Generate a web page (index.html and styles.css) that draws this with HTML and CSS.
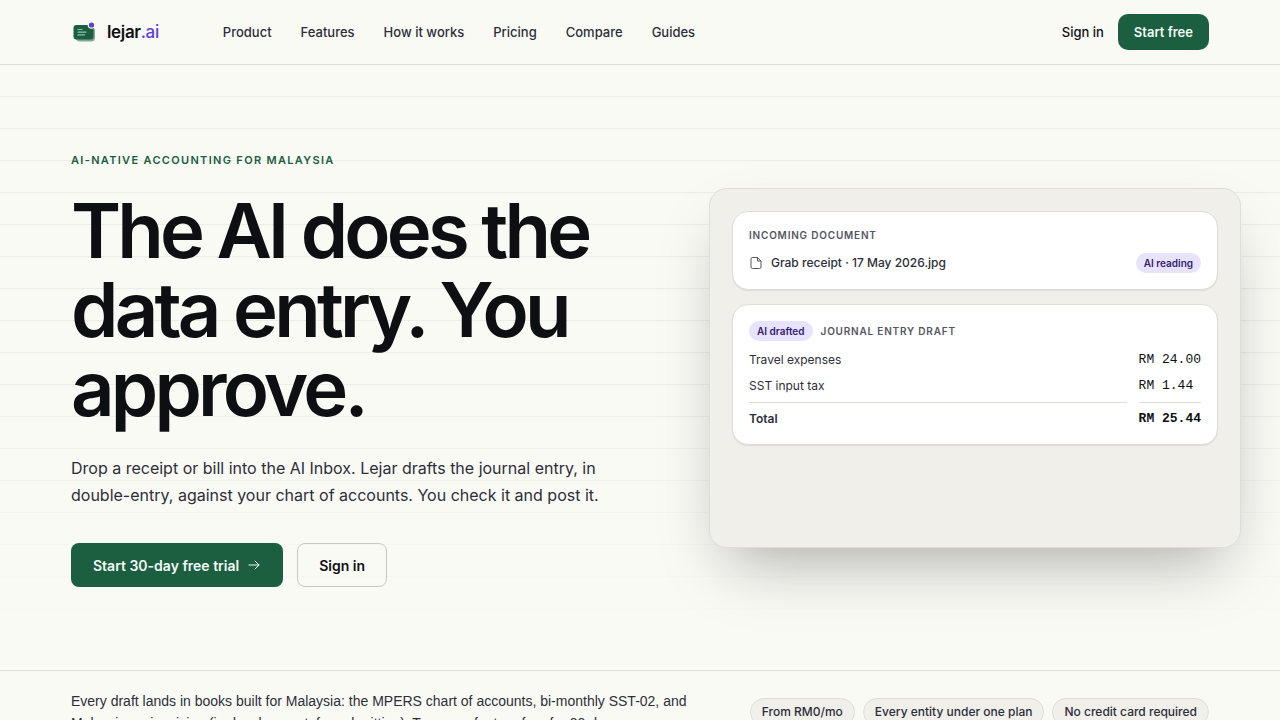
FILE: index.html
```html
<!DOCTYPE html>
<html lang="en">
  <head>
    <meta charset="UTF-8" />
    <meta name="viewport" content="width=device-width, initial-scale=1.0" />
    <title>lejar.ai - AI-native accounting for Malaysia</title>
    <link rel="stylesheet" href="styles.css">
  </head>
  <body>
    <header class="site-header">
      <div class="container header-inner">
        <a href="#" class="brand">
          <svg class="brand-mark" viewBox="0 0 26 26" aria-hidden="true">
            <rect x="5" y="8" width="19" height="14.500" rx="4" fill="#7fa893" />
            <rect x="2.500" y="6" width="20" height="14.500" rx="3" fill="#1b5e40" />
            <path d="M7 10.500h4M7 13.200h8M7 15.900h6.500" stroke="#8fc5a6" stroke-width="1.200" stroke-linecap="round" />
            <circle cx="20.500" cy="6" r="3.800" fill="#fafaf5" />
            <circle cx="20.500" cy="6" r="2.600" fill="#5b3fe0" />
          </svg>
          <span class="brand-name">lejar<span class="brand-tld">.ai</span></span>
        </a>
        <nav class="main-nav">
          <a href="#product">Product</a>
          <a href="#features">Features</a>
          <a href="#how">How it works</a>
          <a href="#pricing">Pricing</a>
          <a href="#compare">Compare</a>
          <a href="#guides">Guides</a>
        </nav>
        <div class="header-actions">
          <a href="#signin" class="signin-link">Sign in</a>
          <button type="button" class="btn btn-small">Start free</button>
        </div>
      </div>
    </header>

    <main>
      <section class="hero">
        <div class="container hero-grid">
          <div class="hero-copy">
            <p class="eyebrow">AI-native accounting for Malaysia</p>
            <h1>The AI does the data entry. You approve.</h1>
            <p class="lead">
              Drop a receipt or bill into the AI Inbox. Lejar drafts the journal entry, in
              double-entry, against your chart of accounts. You check it and post it.
            </p>
            <div class="hero-buttons">
              <button type="button" class="btn btn-primary">
                Start 30-day free trial
                <svg class="arrow" viewBox="0 0 14 14" aria-hidden="true">
                  <path d="M2 7h10M8 3l4 4-4 4" />
                </svg>
              </button>
              <button type="button" class="btn btn-outline">Sign in</button>
            </div>
          </div>

          <div class="demo-panel">
            <div class="card">
              <h2 class="card-label">Incoming document</h2>
              <div class="file-row">
                <svg class="file-icon" viewBox="0 0 14 14" aria-hidden="true">
                  <path d="M8.500 1.500H3.500a1.500 1.500 0 0 0-1.500 1.500v8a1.500 1.500 0 0 0 1.500 1.500h7a1.500 1.500 0 0 0 1.500-1.500V5zM8.500 1.500V5H12" />
                </svg>
                <span class="file-name">Grab receipt · 17 May 2026.jpg</span>
                <span class="badge">AI reading</span>
              </div>
            </div>
            <div class="card">
              <div class="draft-head">
                <span class="badge">AI drafted</span>
                <h2 class="card-label">Journal entry draft</h2>
              </div>
              <table class="entry">
                <tr>
                  <td>Travel expenses</td>
                  <td class="amount">RM 24.00</td>
                </tr>
                <tr class="last-line">
                  <td>SST input tax</td>
                  <td class="amount">RM 1.44</td>
                </tr>
                <tr class="total">
                  <td>Total</td>
                  <td class="amount">RM 25.44</td>
                </tr>
              </table>
            </div>
          </div>
        </div>
      </section>

      <section class="facts">
        <div class="container facts-inner">
          <p>
            Every draft lands in books built for Malaysia: the MPERS chart of accounts, bi-monthly SST-02, and
            Malaysian e-invoicing (in development, for submitting). Try every feature free for 30 days.
          </p>
          <ul class="chips">
            <li>From RM0/mo</li>
            <li>Every entity under one plan</li>
            <li>No credit card required</li>
          </ul>
        </div>
      </section>
    </main>
  </body>
</html>
```

FILE: styles.css
```css
:root {
  --bg: #fafaf5;
  --panel: #f0efea;
  --green: #1b5e40;
  --ink: #0e0f12;
  --text: #2d2e3a;
  --muted: #555663;
  --line: #deded8;
  --violet: #5b3fe0;
  --violet-soft: #e8e3fd;
  --font-ui: Inter, "Liberation Sans", sans-serif;
  --font-text: "Liberation Sans", Arial, sans-serif;
}
* {
  box-sizing: border-box;
}
body {
  margin: 0;
  background: var(--bg);
  color: var(--text);
  font-family: var(--font-ui);
}
h1,
h2,
p,
ul {
  margin: 0;
}
a {
  color: inherit;
  text-decoration: none;
}
.container {
  max-width: 1280px;
  margin: 0 auto;
  padding: 0 71px;
}

/* header */
.site-header {
  border-bottom: 1px solid var(--line);
}
.header-inner {
  display: flex;
  align-items: center;
  height: 64px;
}
.brand {
  display: flex;
  align-items: center;
  gap: 10px;
  margin-right: 64px;
}
.brand-mark {
  width: 26px;
  height: 26px;
}
.brand-name {
  font-size: 17px;
  font-weight: 600;
  letter-spacing: -0.02em;
  color: var(--ink);
}
.brand-tld {
  color: var(--violet);
  font-weight: 500;
}
.main-nav {
  display: flex;
  gap: 29px;
  font-size: 13px;
  font-weight: 500;
}
.header-actions {
  display: flex;
  align-items: center;
  gap: 14px;
  margin-left: auto;
}
.signin-link {
  font-size: 13px;
  font-weight: 500;
  color: var(--ink);
}
.btn {
  font-family: inherit;
  font-weight: 600;
  border: 1px solid transparent;
  border-radius: 8px;
  cursor: pointer;
}
.btn-small {
  height: 36px;
  padding: 0 15px;
  font-size: 13px;
  border-radius: 10px;
  background: var(--green);
  color: #f2faf5;
}

/* hero, on ruled ledger paper that fades out towards the bottom */
.hero {
  padding: 83px 0;
  background:
    linear-gradient(to bottom, transparent 50%, var(--bg) 94%),
    repeating-linear-gradient(to bottom, transparent 0 31px, #ecece8 31px 32px);
}
.hero-grid {
  display: grid;
  grid-template-columns: 1fr 500px;
  gap: 72px;
  align-items: center;
}
.eyebrow {
  font-size: 11px;
  line-height: 24px;
  font-weight: 600;
  letter-spacing: 0.12em;
  text-transform: uppercase;
  color: var(--green);
}
h1 {
  margin-top: 19px;
  font-size: 76px;
  line-height: 79px;
  font-weight: 600;
  letter-spacing: -0.05em;
  color: var(--ink);
}
.lead {
  margin-top: 27px;
  font-size: 16px;
  line-height: 27px;
}
.hero-buttons {
  display: flex;
  gap: 14px;
  margin-top: 34px;
}
.btn-primary,
.btn-outline {
  display: flex;
  align-items: center;
  gap: 8px;
  height: 44px;
  padding: 0 21px;
  font-size: 14px;
}
.btn-primary {
  background: var(--green);
  color: #f2faf5;
}
.btn-outline {
  background: transparent;
  border-color: #c9c9c2;
  color: var(--ink);
}
.arrow {
  width: 14px;
  height: 14px;
  fill: none;
  stroke: currentColor;
  stroke-linecap: round;
  stroke-linejoin: round;
}

/* demo panel */
.demo-panel {
  display: flex;
  flex-direction: column;
  gap: 14px;
  min-height: 360px;
  margin-right: -32px;
  padding: 22px;
  background: var(--panel);
  border: 1px solid var(--line);
  border-radius: 18px;
  box-shadow: 0 30px 60px -20px rgba(14, 15, 18, 0.35);
}
.card {
  padding: 16px;
  background: #fff;
  border: 1px solid var(--line);
  border-radius: 16px;
  box-shadow: 0 1px 1px rgba(14, 15, 18, 0.08);
}
.card-label {
  font-size: 10px;
  line-height: 14px;
  font-weight: 600;
  letter-spacing: 0.08em;
  text-transform: uppercase;
  color: var(--muted);
}
.file-row {
  display: flex;
  align-items: center;
  gap: 8px;
  margin-top: 11px;
}
.file-icon {
  width: 14px;
  height: 14px;
  fill: none;
  stroke: var(--muted);
  stroke-linejoin: round;
}
.file-name {
  flex: 1;
  font-size: 12px;
  font-weight: 500;
}
.badge {
  padding: 0 8px;
  border-radius: 10px;
  background: var(--violet-soft);
  color: #34216e;
  font-size: 10px;
  line-height: 20px;
  font-weight: 600;
}
.draft-head {
  display: flex;
  align-items: center;
  gap: 8px;
  margin-bottom: 6px;
}
/* the rule above the total breaks between the two columns */
.entry {
  width: calc(100% + 24px);
  margin: 0 -12px;
  border-collapse: separate;
  border-spacing: 12px 0;
  font-size: 12px;
}
.entry td {
  height: 26px;
  padding: 0;
}
.entry .amount {
  width: 61px;
  font-family: "Liberation Mono", monospace;
  font-size: 13px;
  white-space: nowrap;
  color: var(--ink);
}
.entry .last-line td {
  height: 29px;
  padding-bottom: 3px;
}
.entry .total td {
  padding-top: 6px;
  border-top: 1px solid var(--line);
  font-weight: 600;
}

/* facts strip */
.facts {
  border-top: 1px solid var(--line);
}
.facts-inner {
  display: flex;
  align-items: center;
  justify-content: space-between;
  gap: 32px;
  padding-top: 19px;
  padding-bottom: 20px;
}
.facts p {
  max-width: 640px;
  font-family: var(--font-text);
  font-size: 14px;
  line-height: 22px;
}
.chips {
  display: flex;
  flex-shrink: 0;
  gap: 8px;
  padding: 0;
  list-style: none;
}
.chips li {
  padding: 0 11px;
  background: var(--panel);
  border: 1px solid var(--line);
  border-radius: 14px;
  font-size: 12px;
  line-height: 26px;
  font-weight: 500;
}
```
